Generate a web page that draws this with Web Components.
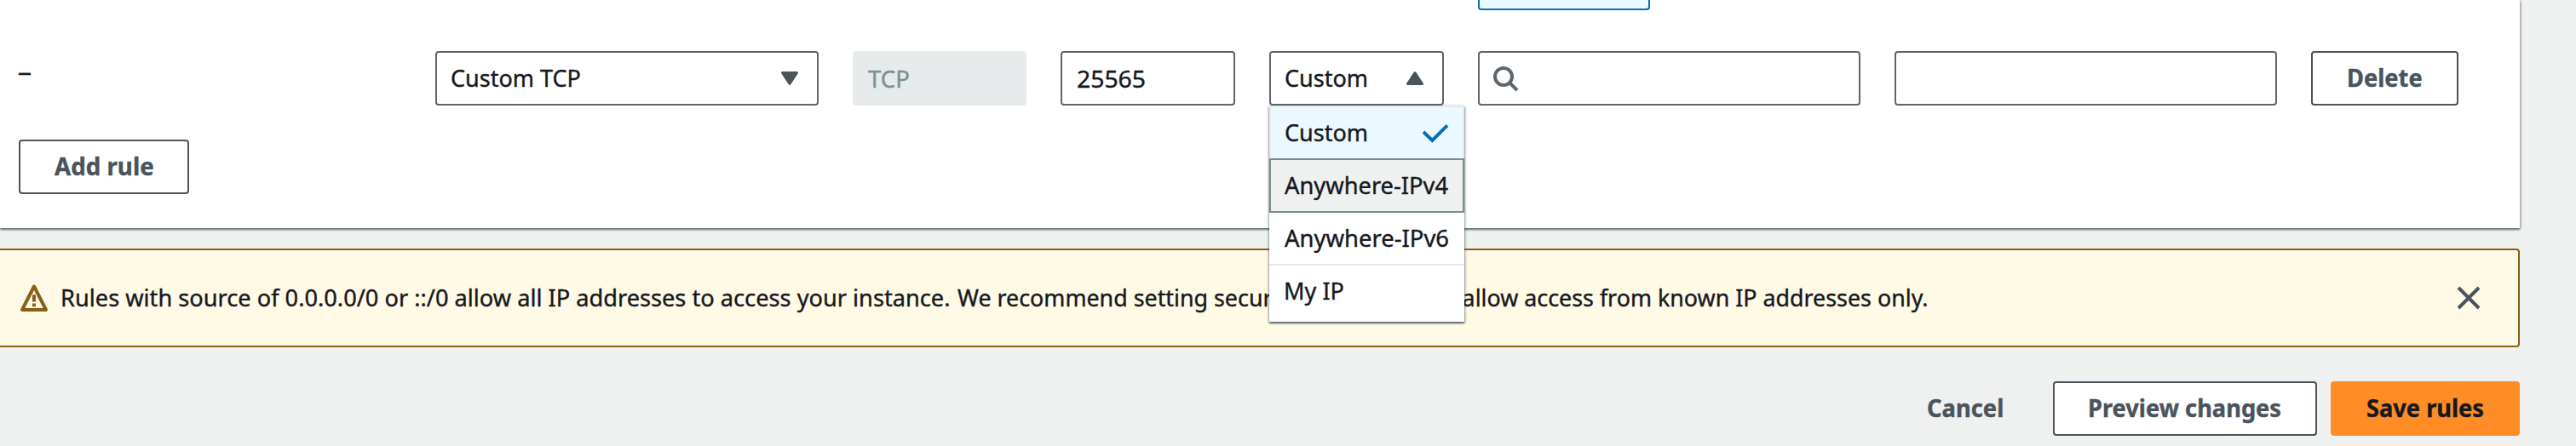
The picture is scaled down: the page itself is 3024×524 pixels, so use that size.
<!DOCTYPE html>
<html lang="en">
<head>
<meta charset="utf-8">
<title>Edit inbound rules</title>
<style>
html, body { margin: 0; height: 524px; overflow: hidden; background: #eff1f0; }
body { font-family: "Noto Sans", "Open Sans", sans-serif; font-size: 28px; line-height: 40px; color: #16191f; }
</style>
</head>
<body>
<rules-page></rules-page>
<script>
const define = (name, html, setup) => {
  const tpl = document.createElement('template');
  tpl.innerHTML = html;
  customElements.define(name, class extends HTMLElement {
    connectedCallback() {
      if (this.shadowRoot) return;
      this.attachShadow({ mode: 'open' }).append(tpl.content.cloneNode(true));
      if (setup) setup.call(this, this.shadowRoot);
    }
  });
};

// A single line of text whose visible glyphs span exactly w pixels.
const ctx = document.createElement('canvas').getContext('2d');
define('fit-text', `<style>
  :host { display: block; flex: none; white-space: nowrap; height: 40px; -webkit-text-stroke: 0.4px currentColor; }
  span { display: inline-block; transform-origin: 0 50%; white-space: nowrap; }
</style><span><slot></slot></span>`, function (root) {
  const w = +this.getAttribute('w');
  const cs = getComputedStyle(this);
  ctx.font = `${cs.fontWeight} ${cs.fontSize} ${cs.fontFamily}`;
  const m = ctx.measureText(this.textContent);
  const s = w / (m.actualBoundingBoxRight + m.actualBoundingBoxLeft);
  this.style.width = w + 'px';
  root.querySelector('span').style.transform = `translateX(${m.actualBoundingBoxLeft * s}px) scaleX(${s})`;
});

define('ui-icon', `<style>
  :host { display: block; flex: none; width: 32px; height: 32px; }
  svg { display: block; width: 100%; height: 100%; overflow: visible; }
</style><svg viewBox="0 0 32 32" fill="none"></svg>`, function (root) {
  root.querySelector('svg').innerHTML = {
    down: '<path d="M7.5 9.5H24.5L16 22.3Z" fill="#4a545c" stroke="#4a545c" stroke-width="3" stroke-linejoin="round"/>',
    up: '<path d="M7.5 22.5H24.5L16 9.7Z" fill="#4a545c" stroke="#4a545c" stroke-width="3" stroke-linejoin="round"/>',
    search: '<circle cx="13" cy="14" r="10" stroke="#5d666e" stroke-width="4"/><path d="M20 21L29 30" stroke="#5d666e" stroke-width="4"/>',
    check: '<path d="M2 15L12.4 25L30 7.4" stroke="#0670b8" stroke-width="4"/>',
    warning: '<path d="M16 2.5L30 30H2Z" stroke="#8a5f17" stroke-width="4" stroke-linejoin="round"/><path d="M16 12.2V20.6M16 22.6V26.2" stroke="#8a5f17" stroke-width="4"/>',
    close: '<path d="M4 4L28 28M28 4L4 28" stroke="#4a545c" stroke-width="4"/>'
  }[this.getAttribute('name')];
});

define('ui-field', `<style>
  :host { display: flex; align-items: center; box-sizing: border-box; height: 64px; border: 2px solid #5d666e;
    border-radius: 4px; background: #fff; padding: 0 18px; position: relative; }
  :host([select]) { justify-content: space-between; }
  :host([disabled]) { background: #e6eaea; border-color: #e6eaea; color: #7f8f8e; }
</style><slot></slot>`);

define('ui-button', `<style>
  :host { display: flex; align-items: center; justify-content: center; box-sizing: border-box; height: 64px;
    border: 2px solid #4a545c; border-radius: 4px; background: #fff; color: #4a545c; font-weight: 700; padding-bottom: 2px; }
  :host([variant=primary]) { background: #ff8c24; border-color: #ff8c24; color: #16191f; }
  :host([variant=link]) { background: none; border-color: transparent; }
</style><slot></slot>`);

define('menu-option', `<style>
  :host { display: flex; align-items: center; justify-content: space-between; box-sizing: border-box; height: 62px;
    padding: 0 18px 2px; border-bottom: 2px solid #e6eaea; background: #fff; }
  :host([selected]) { background: #ecf8ff; border: 2px solid #e6eaea; border-bottom: 0; padding: 0 16px 0 17px; }
  :host([active]) { height: 64px; background: #eff1f0; border: 2px solid #7c8c8b; padding: 0 16px 2px; }
  :host([last]) { height: 66px; border-bottom: 0; padding: 0 19px 8px; }
</style><slot></slot>`);

define('option-menu', `<style>
  :host { position: absolute; z-index: 5; left: -2px; top: 62px; width: 229px; box-sizing: border-box; height: 254px;
    background: #fff; box-shadow: 0 2px 2px rgba(0,28,36,.5), 1px 1px 3px rgba(0,28,36,.3), -1px 1px 3px rgba(0,28,36,.2); }
  .up { padding-bottom: 2px; }
</style>
<menu-option selected><fit-text class="up" w="95">Custom</fit-text><ui-icon name="check"></ui-icon></menu-option>
<menu-option active><fit-text w="192">Anywhere-IPv4</fit-text></menu-option>
<menu-option><fit-text w="192">Anywhere-IPv6</fit-text></menu-option>
<menu-option last><fit-text w="68">My IP</fit-text></menu-option>`);

define('rule-row', `<style>
  :host { display: grid; grid-template-columns: 449px 450px 204px 205px 205px 449px 449px 173px; column-gap: 40px; height: 64px; }
  .id { height: 40px; margin-top: 3px; }
  .up { padding-bottom: 2px; }
</style>
<div class="id"><fit-text w="14">–</fit-text></div>
<ui-field select style="padding:0 16px 0 17px"><fit-text class="up" w="151">Custom TCP</fit-text><ui-icon name="down"></ui-icon></ui-field>
<ui-field disabled style="padding:0 16px"><fit-text w="48">TCP</fit-text></ui-field>
<ui-field><fit-text w="79">25565</fit-text></ui-field>
<ui-field select style="padding:0 16px 0 17px"><fit-text class="up" w="95">Custom</fit-text><ui-icon name="up"></ui-icon><option-menu></option-menu></ui-field>
<ui-field style="padding:0 15px"><ui-icon name="search"></ui-icon></ui-field>
<ui-field></ui-field>
<ui-button><fit-text w="86">Delete</fit-text></ui-button>`);

define('rules-panel', `<style>
  :host { display: flex; flex-direction: column; box-sizing: border-box; width: 2958px; height: 268px; padding-left: 22px; background: #fff;
    box-shadow: 0 2px 2px rgba(0,28,36,.5), 1px 1px 3px rgba(0,28,36,.3); }
  .token { box-sizing: border-box; width: 202px; height: 12px; margin: 0 0 48px 1713px; background: #ecf8ff;
    border: 2px solid #0670b8; border-top: 0; border-radius: 0 0 4px 4px; }
  .add { width: 200px; margin-top: 40px; }
</style>
<div class="token"></div>
<rule-row></rule-row>
<ui-button class="add"><fit-text w="116">Add rule</fit-text></ui-button>`);

define('warning-alert', `<style>
  :host { display: flex; align-items: center; box-sizing: border-box; width: 2958px; height: 116px; margin-top: 24px; padding: 0 42px 0 24px;
    background: #fffae6; border: 2px solid #8a5f17; border-left: 0; border-radius: 0 4px 4px 0; }
  .text { display: flex; flex: 1; margin-left: 17px; padding-bottom: 2px; }
  .text fit-text + fit-text { margin-left: 10px; }
</style>
<ui-icon name="warning"></ui-icon>
<div class="text"><fit-text w="1041">Rules with source of 0.0.0.0/0 or ::/0 allow all IP addresses to access your instance.</fit-text><fit-text w="1138">We recommend setting security group rules to allow access from known IP addresses only.</fit-text></div>
<ui-icon name="close"></ui-icon>`);

define('page-actions', `<style>
  :host { display: flex; justify-content: flex-end; width: 2958px; margin-top: 40px; }
</style>
<ui-button variant="link" style="width:172px;margin-right:17px"><fit-text w="88">Cancel</fit-text></ui-button>
<ui-button style="width:310px;margin-right:16px"><fit-text w="224">Preview changes</fit-text></ui-button>
<ui-button variant="primary" style="width:222px"><fit-text w="136">Save rules</fit-text></ui-button>`);

define('rules-page', `<style>:host { display: block; }
  rules-panel { position: relative; z-index: 1; }
</style><rules-panel></rules-panel><warning-alert></warning-alert><page-actions></page-actions>`);
</script>
</body>
</html>
